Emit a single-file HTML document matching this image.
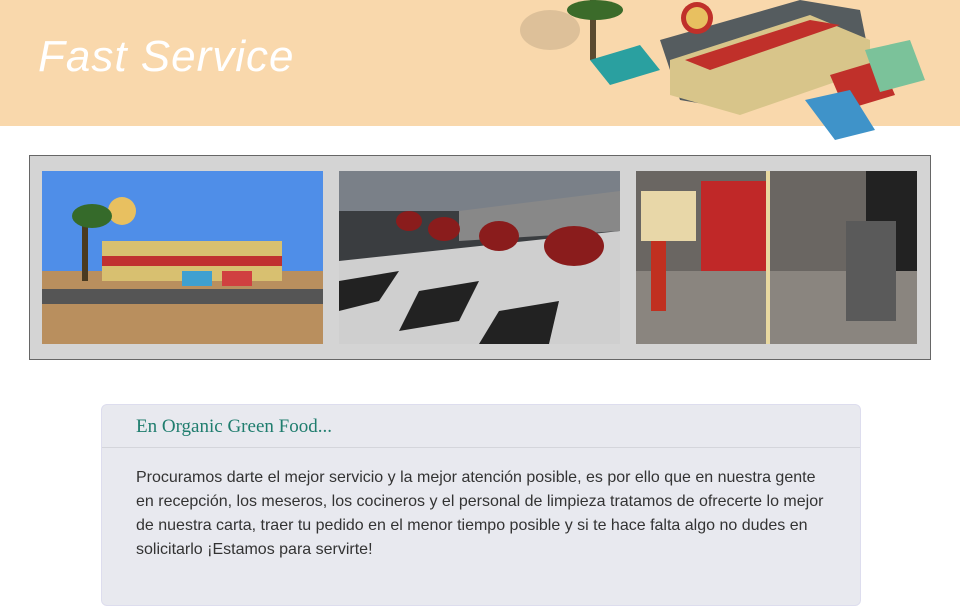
<!DOCTYPE html>
<html><head><meta charset="utf-8"><style>
body{margin:0;width:960px;height:605px;overflow:hidden;background:#fff;font-family:"Liberation Sans",sans-serif;position:relative}
.hdr{position:absolute;left:0;top:0;width:960px;height:126px;background:#f9d8ac}
.title{position:absolute;left:38px;top:32px;font-family:"Liberation Sans",sans-serif;font-size:44px;color:#fff;letter-spacing:1px;font-style:italic}
.gal{position:absolute;left:29px;top:155px;width:900px;height:203px;background:#d4d4d4;border:1px solid #666}
.im{position:absolute;top:15px;width:281px;height:173px}
.panel{position:absolute;left:101px;top:404px;width:758px;height:200px;background:#e8e9ef;border-radius:6px;border:1px solid #dde}
.ph{height:42px;border-bottom:1px solid #d4d5db;font-family:"Liberation Serif",serif;color:#1f7d6e;font-size:19px;padding-left:34px;line-height:44px}
.pb{padding:18px 34px 16px;font-size:16px;line-height:24px;color:#333}
</style></head><body>
<div class="hdr"></div>
<div class="title">Fast Service</div>
<svg style="position:absolute;left:510px;top:0" width="420" height="145">
<ellipse cx="40" cy="30" rx="30" ry="20" fill="#c9b08c" opacity=".6"/>
<rect x="80" y="0" width="6" height="60" fill="#5a4a30"/><ellipse cx="85" cy="10" rx="28" ry="10" fill="#3b6b2a"/>
<polygon points="150,40 290,0 350,10 360,60 230,110 170,100" fill="#555c5f"/>
<polygon points="160,60 300,15 360,40 360,70 230,115 160,95" fill="#d8c58a"/>
<polygon points="175,60 300,20 330,25 200,70" fill="#c0302a"/>
<circle cx="187" cy="18" r="16" fill="#c0302a"/><circle cx="187" cy="18" r="11" fill="#e8c060"/>
<polygon points="80,60 130,45 150,70 100,85" fill="#2aa0a0"/>
<polygon points="320,75 370,60 385,95 335,110" fill="#c0302a"/>
<polygon points="355,50 400,40 415,80 370,92" fill="#7bc29a"/>
<polygon points="295,100 340,90 365,130 325,140" fill="#3f93c9"/>
</svg>
<div class="gal">
<svg class="im" style="left:12px" viewBox="0 0 281 173" preserveAspectRatio="none">
<rect width="281" height="110" fill="#4f8ee8"/><rect y="100" width="281" height="73" fill="#b98f5e"/>
<rect y="118" width="281" height="15" fill="#555"/>
<rect x="60" y="70" width="180" height="40" fill="#d8c070"/><rect x="60" y="85" width="180" height="10" fill="#c03030"/>
<circle cx="80" cy="40" r="14" fill="#e8c060"/><rect x="40" y="40" width="6" height="70" fill="#4a3a20"/><ellipse cx="50" cy="45" rx="20" ry="12" fill="#356a2a"/>
<rect x="140" y="100" width="30" height="15" fill="#3fa0d0"/><rect x="180" y="100" width="30" height="15" fill="#d04040"/>
</svg>
<svg class="im" style="left:309px" viewBox="0 0 281 173" preserveAspectRatio="none">
<rect width="281" height="173" fill="#3a3d40"/><rect y="0" width="281" height="40" fill="#7a8088"/>
<polygon points="0,90 281,60 281,173 0,173" fill="#cfcfcf"/>
<polygon points="0,110 60,100 40,130 0,140" fill="#222"/><polygon points="80,120 140,110 120,150 60,160" fill="#222"/><polygon points="160,140 220,130 210,173 140,173" fill="#222"/>
<polygon points="120,40 281,20 281,60 120,70" fill="#888"/>
<ellipse cx="235" cy="75" rx="30" ry="20" fill="#8a1c1c"/><ellipse cx="160" cy="65" rx="20" ry="15" fill="#8a1c1c"/><ellipse cx="105" cy="58" rx="16" ry="12" fill="#8a1c1c"/><ellipse cx="70" cy="50" rx="13" ry="10" fill="#8a1c1c"/>
</svg>
<svg class="im" style="left:606px" viewBox="0 0 281 173" preserveAspectRatio="none">
<rect width="281" height="173" fill="#6a6662"/><rect y="100" width="281" height="73" fill="#8a857f"/>
<rect x="65" y="10" width="65" height="90" fill="#c02828"/><rect x="5" y="20" width="55" height="50" fill="#e8d7a8"/>
<rect x="130" y="0" width="4" height="173" fill="#e8d8a0"/><rect x="230" y="0" width="51" height="100" fill="#222"/>
<rect x="210" y="50" width="50" height="100" fill="#5a5a5a"/><rect x="15" y="70" width="15" height="70" fill="#c03020"/>
</svg>
</div>
<div class="panel">
<div class="ph">En Organic Green Food...</div>
<div class="pb">Procuramos darte el mejor servicio y la mejor atención posible, es por ello que en nuestra gente en recepción, los meseros, los cocineros y el personal de limpieza tratamos de ofrecerte lo mejor de nuestra carta, traer tu pedido en el menor tiempo posible y si te hace falta algo no dudes en solicitarlo ¡Estamos para servirte!</div>
</div>
</body></html>
